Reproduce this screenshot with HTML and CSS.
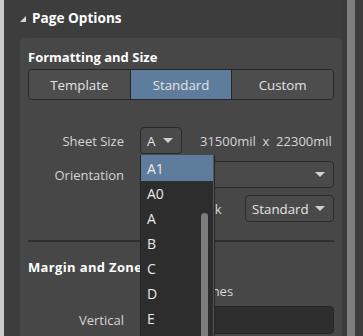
FILE: index.html
```html
<!DOCTYPE html>
<html>
<head>
<meta charset="utf-8">
<link rel="stylesheet" href="styles.css">
</head>
<body>
<div class="frame">
  <div class="edge"></div>
  <div class="panel">
    <div class="head"><span class="tri"></span><span class="head-title">Page Options</span></div>
    <div class="card">
      <h2 class="title">Formatting and Size</h2>
      <div class="seg">
        <div class="seg-btn">Template</div>
        <div class="seg-btn on">Standard</div>
        <div class="seg-btn">Custom</div>
      </div>
      <div class="form">
        <div class="lbl">Sheet Size</div>
        <div class="ctl">
          <div class="dd-wrap">
            <div class="dd dd-small"><span>A</span><span class="arrow"></span></div>
            <div class="list">
              <div class="item sel">A1</div>
              <div class="item">A0</div>
              <div class="item">A</div>
              <div class="item">B</div>
              <div class="item">C</div>
              <div class="item">D</div>
              <div class="item">E</div>
              <div class="thumb"></div>
            </div>
          </div>
          <span class="dims">31500mil&nbsp; x&nbsp; 22300mil</span>
        </div>
        <div class="lbl">Orientation</div>
        <div class="ctl">
          <div class="dd dd-wide"><span>Landscape</span><span class="arrow"></span></div>
        </div>
        <div class="lbl"></div>
        <div class="ctl">
          <span class="check"></span><span class="cklbl">Title Block</span>
          <div class="dd dd-std"><span>Standard</span><span class="arrow"></span></div>
        </div>
      </div>
      <div class="sep"></div>
      <h2 class="title title2">Margin and Zones</h2>
      <div class="form form2">
        <div class="lbl"></div>
        <div class="ctl ctl-short"><span class="check"></span><span class="cklbl">Show Zones</span></div>
        <div class="lbl">Vertical</div>
        <div class="ctl"><div class="input">4</div></div>
      </div>
    </div>
  </div>
  <div class="gap"></div>
  <div class="vbar"></div>
  <div class="rest"></div>
</div>
</body>
</html>
```

FILE: styles.css
```css
html, body {
  margin: 0;
  padding: 0;
  background: #3c3c3c;
  overflow: hidden;
}
body {
  width: 363px;
  height: 336px;
  font-family: "Open Sans", "Noto Sans", sans-serif;
  font-size: 13px;
  color: #dcdcdc;
}
.frame {
  display: flex;
  height: 336px;
  overflow: hidden;
}
.edge {
  width: 4px;
  background: #cacaca;
  flex: none;
}
.panel {
  width: 338px;
  flex: none;
  background: #3d3d3d;
  padding-left: 16px;
  box-sizing: border-box;
}
.gap {
  width: 5px;
  background: #3b3b3b;
  flex: none;
}
.vbar {
  width: 8px;
  background: #7e7e7e;
  flex: none;
}
.rest {
  flex: 1;
  background: #3d3d3d;
}
.head {
  height: 38px;
  display: flex;
  align-items: center;
  box-sizing: border-box;
  padding-bottom: 3px;
}
.tri {
  width: 0;
  height: 0;
  border-left: 6px solid transparent;
  border-bottom: 6px solid #d8d8d8;
  margin-right: 6px;
  margin-top: 3px;
}
.head-title {
  font-weight: 700;
  font-size: 13.6px;
  color: #ffffff;
}
.card {
  background: #474747;
  border-radius: 5px 5px 0 0;
  padding: 10px 8px 0 8px;
  height: 320px;
}
.title {
  margin: 0;
  font-size: 13px;
  line-height: 18px;
  font-weight: 700;
  color: #ffffff;
}
.seg {
  margin-top: 3px;
  display: flex;
  height: 31px;
  border: 1px solid #262626;
  border-radius: 4px;
  box-sizing: border-box;
  overflow: hidden;
}
.seg-btn {
  flex: 1;
  display: flex;
  align-items: center;
  justify-content: center;
  background: #4d4d4d;
  color: #e2e2e2;
  font-size: 13.3px;
}
.seg-btn + .seg-btn {
  border-left: 1px solid #262626;
}
.seg-btn.on {
  background: #5e7d9c;
}
.form {
  margin-top: 27px;
  display: grid;
  grid-template-columns: 96px 1fr;
  column-gap: 16px;
  row-gap: 7px;
  grid-auto-rows: 27px;
}
.lbl {
  display: flex;
  align-items: center;
  justify-content: flex-end;
  color: #d6d6d6;
  font-size: 13px;
}
.ctl {
  display: flex;
  align-items: center;
  position: relative;
}
.dd-wrap {
  position: relative;
  height: 27px;
}
.dd {
  height: 27px;
  box-sizing: border-box;
  border: 1px solid #2a2a2a;
  border-radius: 4px;
  background: #4a4a4a;
  display: flex;
  align-items: center;
  justify-content: space-between;
  padding: 0 8px 0 6px;
  color: #e4e4e4;
  font-size: 13.3px;
}
.dd-small {
  width: 42px;
}
.dd-wide {
  width: 194px;
}
.dd-std {
  width: 89px;
  margin-left: auto;
}
.arrow {
  width: 0;
  height: 0;
  border-left: 5px solid transparent;
  border-right: 5px solid transparent;
  border-top: 5px solid #d0d0d0;
}
.dims {
  margin-left: 18px;
  color: #d6d6d6;
  font-size: 13px;
  white-space: nowrap;
}
.check {
  width: 14px;
  height: 14px;
  border: 1px solid #2a2a2a;
  background: #3a3a3a;
  border-radius: 2px;
  box-sizing: border-box;
  flex: none;
}
.cklbl {
  margin-left: 6px;
  color: #d6d6d6;
  font-size: 13px;
  white-space: nowrap;
}
.list {
  position: absolute;
  left: 0;
  top: 28px;
  width: 74px;
  height: 200px;
  background: #2d2d2d;
  border-left: 1px solid #222;
  border-right: 1px solid #555;
  box-shadow: 1px 0 0 #262626;
  box-sizing: border-box;
  z-index: 5;
}
.item {
  height: 25px;
  display: flex;
  align-items: center;
  padding-left: 6px;
  color: #eaeaea;
  font-size: 14px;
}
.item.sel {
  background: #5e7d9c;
  height: 26px;
}
.thumb {
  position: absolute;
  left: 60px;
  top: 58px;
  width: 7px;
  height: 150px;
  border-radius: 4px;
  background: #7c7c7c;
}
.sep {
  margin-top: 18px;
  height: 2px;
  background: #2e2e2e;
}
.title2 {
  margin-top: 16px;
  letter-spacing: 0.35px;
}
.form2 {
  margin-top: 3px;
  grid-template-rows: 24px 28px;
  grid-auto-rows: auto;
  row-gap: 3px;
}
.input {
  width: 194px;
  height: 28px;
  box-sizing: border-box;
  border: 1px solid #262626;
  border-radius: 4px;
  background: #2d2d2d;
  display: flex;
  align-items: center;
  padding-left: 6px;
  color: #e4e4e4;
  font-size: 13px;
}
```
